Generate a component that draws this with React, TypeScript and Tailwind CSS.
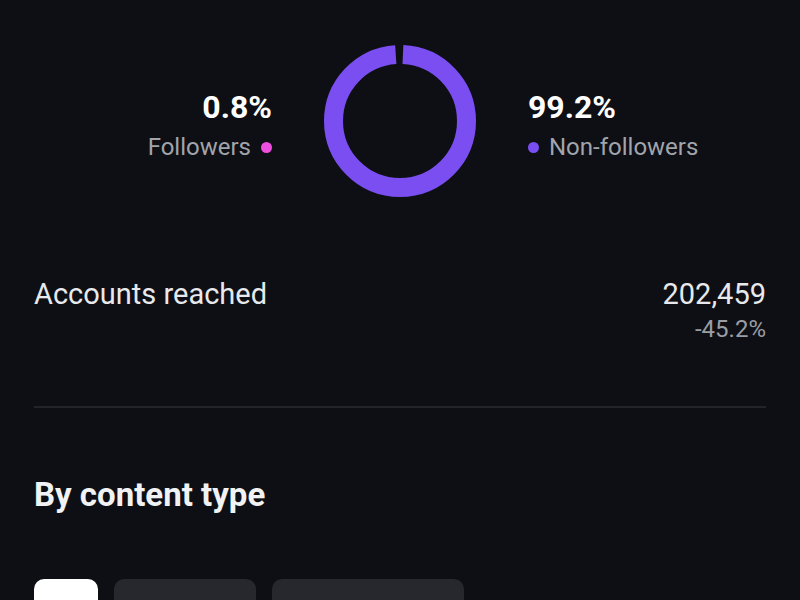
import React from "react"

const R = 66.5
const C = 2 * Math.PI * R

function Donut() {
  // 0.8% followers slice is basically just the gap at the top
  const gap = 8
  return (
    <svg width="152" height="152" viewBox="0 0 152 152" className="shrink-0">
      <circle
        cx="76"
        cy="76"
        r={R}
        fill="none"
        stroke="#7a4ef0"
        strokeWidth="19"
        strokeDasharray={`${C - gap} ${gap}`}
        strokeDashoffset={-3}
        transform="rotate(-90 76 76)"
      />
    </svg>
  )
}

export default function App() {
  return (
    <div
      className="w-[800px] h-[600px] overflow-hidden bg-[#0d0f14] text-[#e8e9ec]"
      style={{ fontFamily: "Roboto, 'Noto Sans', sans-serif" }}
    >
      {/* ── Followers split ── */}
      <div className="grid grid-cols-[1fr_auto_1fr] items-start gap-x-[52px] pt-[45px]">
        <div className="mt-[43px] flex flex-col items-end">
          <span className="text-[32px] leading-[38px] font-bold text-white">0.8%</span>
          <span className="mt-[6px] flex items-center gap-[10px] text-[24px] leading-[30px] text-[#a1a4ab]">
            Followers
            <span className="h-[11px] w-[11px] rounded-full bg-[#ee4fe0]" />
          </span>
        </div>
        <Donut />
        <div className="mt-[43px] flex flex-col items-start">
          <span className="text-[32px] leading-[38px] font-bold text-white">99.2%</span>
          <span className="mt-[6px] flex items-center gap-[10px] text-[24px] leading-[30px] text-[#a1a4ab]">
            <span className="h-[11px] w-[11px] rounded-full bg-[#7a4ef0]" />
            Non-followers
          </span>
        </div>
      </div>

      {/* ── Accounts reached ── */}
      <div className="px-[34px] pt-[80px]">
        <div className="flex justify-between">
          <span className="text-[29px] leading-[34px]">Accounts reached</span>
          <div className="flex flex-col items-end">
            <span className="text-[29px] leading-[34px]">202,459</span>
            <span className="mt-[4px] text-[24px] leading-[28px] text-[#9a9da4]">-45.2%</span>
          </div>
        </div>
        <div className="mt-[63px] h-[2px] bg-[#22242a]" />

        {/* ── By content type ── */}
        <h2 className="mt-[68px] text-[33px] leading-[38px] font-bold text-[#f1f2f4]">By content type</h2>
        <div className="mt-[65px] flex gap-[16px]">
          <div className="h-[48px] w-[64px] rounded-[10px] bg-white" />
          <div className="h-[48px] w-[142px] rounded-[10px] bg-[#26282d]" />
          <div className="h-[48px] w-[192px] rounded-[10px] bg-[#26282d]" />
        </div>
      </div>
    </div>
  )
}
